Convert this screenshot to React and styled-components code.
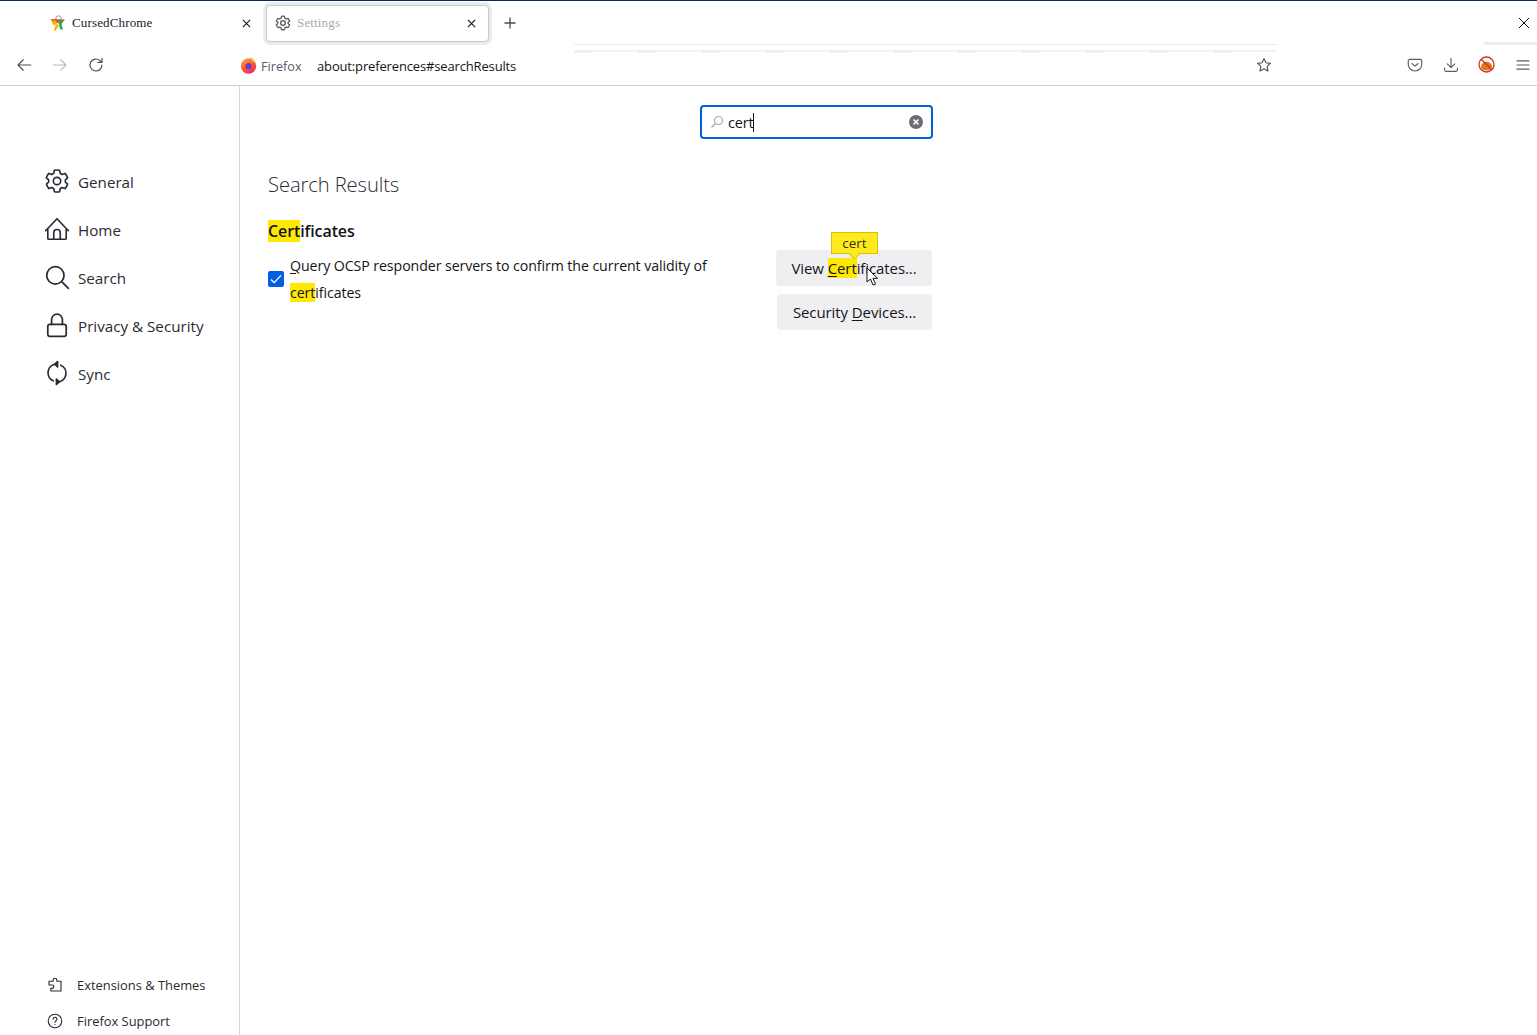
import React from "react";
import styled, { createGlobalStyle } from "styled-components";

const Global = createGlobalStyle`
  html, body { margin: 0; padding: 0; background: #fff; }
  body { font-family: "Open Sans", "Noto Sans", "Liberation Sans", sans-serif; color: #15141a; overflow: hidden; }
  * { box-sizing: border-box; }
`;

const Page = styled.div`
  width: 1537px; height: 1035px; display: flex; flex-direction: column; overflow: hidden; position: relative;
  border-top: 1px solid #0a2a55;
`;
const TabRow = styled.div`
  height: 43px; display: flex; align-items: center; padding: 1px 6px 0 0; position: relative;
`;
const Tab = styled.div`
  height: ${p => p.$active ? 37 : 36}px; display: flex; align-items: center; border-radius: 4px;
  width: ${p => p.$w}px; padding: ${p => p.$pad};
  ${p => p.$active ? "background:#fff;border:1px solid #c9c9c9;box-shadow:0 0 0 3px #ececec;" : ""}
`;
const TabTitle = styled.span`
  flex: 1; font-size: 13px; margin-left: ${p => p.$ml}px; color: ${p => p.$c}; letter-spacing: 0.15px;
  font-family: "Liberation Serif", serif; white-space: nowrap;
`;
const NewTab = styled.button`
  border: 0; background: none; padding: 0; margin-left: 13px; width: 16px; height: 16px; display: flex;
`;
const WindowClose = styled.button`
  border: 0; background: none; padding: 0; margin-left: auto; width: 14px; height: 14px; display: flex;
`;
const GlitchTop = styled.div`
  position: absolute; left: 574px; top: 43px; width: 703px; height: 1px; background: #ececec;
`;
const GlitchBar = styled.div`
  position: absolute; left: 574px; top: 49px; width: 703px; height: 3px;
  background:
    linear-gradient(#eeeeef,#eeeeef) 0 0/100% 1.5px no-repeat,
    repeating-linear-gradient(90deg,#efeff0 0 18px,transparent 18px 64px);
`;
const GlitchRight = styled.div`
  position: absolute; left: 1484px; top: 41px; width: 53px; height: 3px; background: #eeeeef;
`;
const Toolbar = styled.div`
  height: 42px; display: flex; align-items: center; padding: 0 5px 0 15px; border-bottom: 1px solid #cfcfcf;
`;
const IconBtn = styled.span`
  display: flex; width: 18px; height: 18px; margin-left: ${p => p.$ml || 0}px; align-items: center; justify-content: center;
`;
const Identity = styled.span`
  font-size: 12.7px; color: #5b5b66; margin-left: 4px; width: 56px; padding-top: 2px;
`;
const Url = styled.span`
  font-size: 13px; color: #15141a; letter-spacing: -0.15px; padding-top: 2px;
`;
const Spacer = styled.div`flex: 1;`;

const Main = styled.div`
  flex: 1; display: grid; grid-template-columns: 240px 1fr; min-height: 0;
`;
const Sidebar = styled.aside`
  border-right: 1px solid #d7d7db; display: flex; flex-direction: column; padding: 72px 0 0 44px;
`;
const NavItem = styled.div`
  height: 48px; display: flex; align-items: center; gap: 8px; font-size: 15.2px; color: #2b2a33;
`;
const NavIcon = styled.span`
  width: 26px; height: 26px; display: flex; align-items: center; justify-content: center; margin-top: -2px;
`;
const Footer = styled.div`
  margin-top: auto; display: flex; flex-direction: column; gap: 8px; padding-left: 2px;
`;
const FootItem = styled.div`
  height: 28px; display: flex; align-items: center; gap: 13px; font-size: 12.9px; color: #2b2a33;
`;
const FootIcon = styled.span`
  width: 18px; height: 18px; display: flex; align-items: center; justify-content: center;
`;
const Content = styled.main`
  width: 692px; padding: 19px 0 0 28px; display: flex; flex-direction: column;
`;
const SearchBox = styled.div`
  align-self: flex-end; width: 233px; height: 34px; border: 2px solid #0060df; border-radius: 4px;
  display: flex; align-items: center; padding: 0 8px; margin-right: -1px; font-size: 14.5px;
`;
const Caret = styled.span`
  display: inline-block; width: 1px; height: 19px; background: #15141a;
`;
const SearchText = styled.span`
  margin-left: 4px; flex: 1; display: flex; align-items: center; color: #15141a; letter-spacing: -0.2px;
`;
const Title = styled.h1`
  margin: 29px 0 0; font-size: 20.2px; font-weight: 300; line-height: 32px; color: #2b2a33; letter-spacing: -0.1px;
`;
const SectionTitle = styled.h2`
  margin: 20px 0 0; font-size: 16px; font-weight: 600; line-height: 22px; color: #15141a; letter-spacing: -0.1px;
`;
const Mark = styled.mark`
  background: #ffe900; color: inherit;
`;
const U = styled.span`text-decoration: underline; text-underline-offset: 2px;`;
const Row = styled.div`
  display: flex; justify-content: space-between; margin-top: 9px;
`;
const CheckWrap = styled.div`
  display: flex; align-items: center; width: 450px; gap: 6px; height: 54px; margin-top: 1px;
`;
const Check = styled.span`
  width: 16px; height: 16px; background: #0060df; border-radius: 2px; flex: none; display: flex; align-items: center; justify-content: center; margin-top: -1px;
`;
const Label = styled.div`
  font-size: 14.2px; line-height: 27px; color: #15141a; letter-spacing: -0.09px; margin-top: -1px;
`;
const Buttons = styled.div`
  display: flex; flex-direction: column; align-items: flex-end; gap: 8px; margin-top: -1px;
`;
const Btn = styled.div`
  position: relative; height: 36px; width: ${p => p.$w}px; background: #efeff2; border-radius: 4px;
  display: flex; align-items: center; justify-content: center; font-size: 15px; color: #15141a; letter-spacing: -0.09px;
`;
const Tip = styled.div`
  position: absolute; left: 55px; top: -18px; width: 47px; height: 22px; background: #ffea1f; border: 1px solid #d7c000;
  font-size: 13.5px; display: flex; align-items: center; justify-content: center; color: #3a3500; letter-spacing: 0;
  &::after { content: ""; position: absolute; left: 18px; bottom: -6px; width: 8px; height: 8px; background: #ffea1f; border-right: 1px solid #d7c000; border-bottom: 1px solid #d7c000; transform: rotate(45deg) scale(.8); }
`;
const Cursor = styled.svg`
  position: absolute; left: 90px; top: 17px;
`;

const S = ({ size = 18, vb = 24, c = "#2b2a33", w = 1.6, children }) => (
  <svg width={size} height={size} viewBox={`0 0 ${vb} ${vb}`} fill="none" stroke={c} strokeWidth={w} strokeLinecap="round" strokeLinejoin="round">{children}</svg>
);
const X = ({ size = 10, c = "#15141a", w = 1.2 }) => (
  <svg width={size} height={size} viewBox="0 0 10 10" stroke={c} strokeWidth={w}><path d="M1 1 9 9M9 1 1 9" /></svg>
);
const GearPath = "M12 1.800c.9 0 1.700.1 2.400.3l.5 2.800 1.900 1.100 2.600-1a10.500 10.500 0 0 1 2.400 4.200l-2.100 1.800v2l2.100 1.800a10.500 10.500 0 0 1-2.400 4.200l-2.600-1-1.900 1.100-.5 2.800a10.500 10.500 0 0 1-4.800 0l-.5-2.800-1.900-1.100-2.600 1a10.500 10.500 0 0 1-2.400-4.200l2.100-1.800v-2L2.100 9.200a10.500 10.500 0 0 1 2.400-4.200l2.600 1L9 4.900l.5-2.800c.7-.2 1.600-.3 2.500-.3z";

export default function App() {
  return (
    <Page>
      <Global />
      <TabRow>
        <Tab $w={266} $pad="0 15px 0 50px">
          <svg width="16" height="17" viewBox="0 0 16 17">
            <circle cx="8.500" cy="3.500" r="2.600" fill="none" stroke="#b9b9b9" strokeWidth="1.400" />
            <path d="M0.500 4 15 4.500 12 8 4 8z" fill="#e2473a" />
            <path d="M1 5.500h5l1 3-3.500 2z" fill="#f4b400" />
            <path d="M8 6l6-1-2.500 4 1.500 6-3-1z" fill="#34a853" />
            <path d="M6 9l3 1-3.500 6-1.500-1z" fill="#f4b400" />
          </svg>
          <TabTitle $ml={6} $c="#1a1a2a">CursedChrome</TabTitle>
          <X size={9} />
        </Tab>
        <Tab $w={223} $active $pad="0 12px 0 8px">
          <S size={16} c="#55555f" w={2}><path d={GearPath} strokeDasharray="2 1.500" /><circle cx="12" cy="12" r="3.500" /></S>
          <TabTitle $ml={6} $c="#a9a9ad">Settings</TabTitle>
          <X size={9} />
        </Tab>
        <NewTab>
          <svg width="16" height="16" viewBox="0 0 16 16" stroke="#4a4a55" strokeWidth="1.300"><path d="M8 2.500v11M2.500 8h11" /></svg>
        </NewTab>
        <WindowClose>
          <svg width="14" height="14" viewBox="0 0 14 14" stroke="#111" strokeWidth="1"><path d="M2 2 12 12M12 2 2 12" /></svg>
        </WindowClose>
        <GlitchTop />
        <GlitchRight />
      </TabRow>
      <GlitchBar />
      <Toolbar>
        <IconBtn><S size={18} c="#4e4e58" w={1.500}><path d="M21 12H4M11 5l-7 7 7 7" /></S></IconBtn>
        <IconBtn $ml={18}><S size={18} c="#bcbcc2" w={1.500}><path d="M3 12h17M13 5l7 7-7 7" /></S></IconBtn>
        <IconBtn $ml={18}><S size={18} c="#4e4e58" w={1.500}><path d="M20 12a8 8 0 1 1-2.500-5.800L20 8.500M20 3v5.500h-5.500" /></S></IconBtn>
        <IconBtn $ml={134}>
          <svg width="17" height="18" viewBox="0 0 16 17">
            <defs><linearGradient id="ff" x1="0.200" y1="0" x2="0.800" y2="1"><stop offset="0" stopColor="#ffa436" /><stop offset=".5" stopColor="#ff5a33" /><stop offset="1" stopColor="#e0246a" /></linearGradient></defs>
            <circle cx="8" cy="9.500" r="7.300" fill="url(#ff)" />
            <path d="M10 0.500c2.500 1.500 4.500 4 5 7.500-1-2-2.500-3-4-3 .3-1.500 0-3-1-4.500z" fill="#ffc43a" />
            <circle cx="8" cy="9.500" r="3" fill="#6d3bc6" />
          </svg>
        </IconBtn>
        <Identity>Firefox</Identity>
        <Url>about:preferences#searchResults</Url>
        <Spacer />
        <IconBtn><S size={18} c="#4e4e58" w={1.500}><path d="M12 3.500l2.600 5.500 6 .8-4.400 4.100 1.100 6-5.300-2.900-5.300 2.900 1.100-6L3.400 9.800l6-.8z" /></S></IconBtn>
        <IconBtn $ml={133}><S size={18} c="#5b5b66" w={1.500}><path d="M5 4.500h14a2 2 0 0 1 2 2V11a9 9 0 0 1-18 0V6.500a2 2 0 0 1 2-2z" /><path d="M8 10l4 3.500 4-3.500" /></S></IconBtn>
        <IconBtn $ml={18}><S size={18} c="#5b5b66" w={1.500}><path d="M12 3v12M7 10.500l5 5 5-5M3.500 16v2.500a2 2 0 0 0 2 2h13a2 2 0 0 0 2-2V16" /></S></IconBtn>
        <IconBtn $ml={17}>
          <svg width="17" height="17" viewBox="0 0 17 17">
            <circle cx="8.500" cy="8.500" r="7.500" fill="#fff" stroke="#d9302a" strokeWidth="1.300" />
            <path d="M3 11c0-4 4-6 7-5 3 .8 4 3 4 5 0 2-2 3.500-5 3.500S3 13.500 3 11z" fill="#d57c1e" />
            <path d="M3.200 3.200 13.800 13.800" stroke="#d9302a" strokeWidth="1.300" />
          </svg>
        </IconBtn>
        <IconBtn $ml={19}><S size={18} c="#5b5b66" w={1.500}><path d="M4 6.500h16M4 12h16M4 17.500h16" /></S></IconBtn>
      </Toolbar>
      <Main>
        <Sidebar>
          <NavItem>
            <NavIcon><S size={26} w={1.500}><path d={GearPath} /><circle cx="12" cy="12" r="3.400" /></S></NavIcon>General
          </NavItem>
          <NavItem>
            <NavIcon><S size={26} w={1.500}><path d="M3.500 20.500v-9L12 2.500l8.500 9v9a1 1 0 0 1-1 1h-15a1 1 0 0 1-1-1zM1.500 13.500l2-2M22.500 13.500l-2-2M9 21.500v-6a3 3 0 0 1 6 0v6" /></S></NavIcon>Home
          </NavItem>
          <NavItem>
            <NavIcon><S size={26} w={1.600}><circle cx="10.500" cy="10.500" r="8" /><path d="M16.500 16.500l6 6" /></S></NavIcon>Search
          </NavItem>
          <NavItem>
            <NavIcon><S size={26} w={1.600}><path d="M7 11.500V7a5 5 0 0 1 10 0v4.500" /><rect x="3.500" y="11.500" width="17" height="11" rx="2" /></S></NavIcon>Privacy &amp; Security
          </NavItem>
          <NavItem>
            <NavIcon><S size={26} w={1.600}><path d="M15.500 4.800a8 8 0 0 1-2.500 15.300M8.500 19.200A8 8 0 0 1 11 3.900" /><path d="M12.500 1.500 10 3.900l2.500 2.400zM11.500 22.500l2.500-2.400-2.500-2.400z" fill="#2b2a33" /></S></NavIcon>Sync
          </NavItem>
          <Footer>
            <FootItem>
              <FootIcon><S size={18} w={1.500}><path d="M12 3c1.500 0 2.500 1 2.500 2.500V7H20v13H6.500v-3.500H8c1.500 0 2.500-1 2.500-2.300S9.500 12 8 12H4V7h5.500V5.500C9.500 4 10.500 3 12 3z" /></S></FootIcon>Extensions &amp; Themes
            </FootItem>
            <FootItem>
              <FootIcon><S size={18} w={1.500}><circle cx="12" cy="12" r="9" /><path d="M9.500 9.500a2.500 2.500 0 1 1 3.800 2.100c-.9.600-1.300 1-1.300 2M12 16.500v.2" /></S></FootIcon>Firefox Support
            </FootItem>
          </Footer>
        </Sidebar>
        <Content>
          <SearchBox>
            <svg width="14" height="14" viewBox="0 0 14 14" fill="none" stroke="#a8a8ae" strokeWidth="1.200"><circle cx="8.500" cy="5.500" r="4" /><path d="M5.500 8.500 1.500 12.500" /></svg>
            <SearchText>cert<Caret /></SearchText>
            <svg width="14" height="14" viewBox="0 0 14 14"><circle cx="7" cy="7" r="7" fill="#6d6d75" /><path d="M4.500 4.500l5 5M9.500 4.500l-5 5" stroke="#fff" strokeWidth="1.600" /></svg>
          </SearchBox>
          <Title>Search Results</Title>
          <SectionTitle><Mark>Cert</Mark>ificates</SectionTitle>
          <Row>
            <CheckWrap>
              <Check>
                <svg width="12" height="10" viewBox="0 0 13 11" fill="none" stroke="#fff" strokeWidth="1.500"><path d="M1 6l3.500 3.500L12 1.500" /></svg>
              </Check>
              <Label><U>Q</U>uery OCSP responder servers to confirm the current validity of <Mark>cert</Mark>ificates</Label>
            </CheckWrap>
            <Buttons>
              <Btn $w={156}>
                <span>View <U><Mark>C</Mark></U><Mark>ert</Mark>ificates...</span>
                <Tip>cert</Tip>
                <Cursor width="13" height="19" viewBox="0 0 13 19"><path d="M1 1v14l3.500-3 2.500 6 2.500-1-2.500-5.700H11.500z" fill="#fff" stroke="#111" strokeWidth="1" /></Cursor>
              </Btn>
              <Btn $w={155}><span>Security <U>D</U>evices...</span></Btn>
            </Buttons>
          </Row>
        </Content>
      </Main>
    </Page>
  );
}
